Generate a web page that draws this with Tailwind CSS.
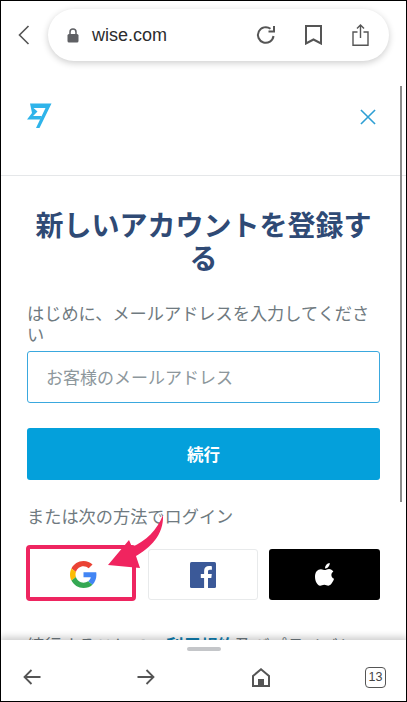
<!DOCTYPE html>
<html lang="ja"><head><meta charset="utf-8"><script src="https://cdn.jsdelivr.net/npm/@tailwindcss/browser@4"></script></head>
<body class="m-0 bg-white">
<div class="relative w-[407px] h-[702px] overflow-hidden bg-white font-['Noto_Sans_CJK_JP','Noto_Sans',sans-serif]">
  <!-- browser top bar -->
  <div class="h-[70px] flex items-start pl-[18px] pt-[9px]">
    <svg class="w-[12px] h-[20px] mt-[16px] mr-[18px]" viewBox="0 0 12 20" fill="none" stroke="#555" stroke-width="1.6"><path d="M10.5 1 1.500 10l9 9"/></svg>
    <div class="w-[341px] h-[52px] rounded-full bg-white shadow-[0_2px_7px_rgba(0,0,0,0.2)] flex items-center pl-[19px] pr-[20px]">
      <svg class="w-[12px] h-[15px] mr-[13px]" viewBox="0 0 12 15"><path d="M3 6V4a3 3 0 0 1 6 0v2" fill="none" stroke="#5f6064" stroke-width="1.500"/><rect x="0.500" y="6" width="11" height="8.500" rx="1.500" fill="#5f6064"/></svg>
      <span class="font-['Liberation_Sans'] text-[18px] text-[#2c2c2e] flex-1">wise.com</span>
      <svg class="w-[20px] h-[20px] mr-[29px]" viewBox="0 0 20 20" fill="none" stroke="#555" stroke-width="2"><path d="M17.500 11a7.800 7.800 0 1 1-3-7.200"/><path d="M18 1v5.500h-5.500" stroke-width="2"/></svg>
      <svg class="w-[17px] h-[20px] mr-[30px]" viewBox="0 0 17 20" fill="none" stroke="#555" stroke-width="2"><path d="M1 1h15v17.500l-7.500-4-7.500 4z"/></svg>
      <svg class="w-[17px] h-[22px]" viewBox="0 0 17 22" fill="none" stroke="#555" stroke-width="1.400"><path d="M5.500 8H1v13.300h15V8h-4.500M8.500 14V1M5 4.500 8.500 1 12 4.500"/></svg>
    </div>
  </div>
  <!-- page -->
  <div class="h-[106px] border-b border-[#e5e7e9] flex items-start justify-between pl-[27px] pr-[31px]">
    <svg class="w-[25px] h-[25px] mt-[33px]" viewBox="27 103.500 25 25" fill="#2fb4ea"><path d="M30 104H51.500L39.500 128.500H36L45.500 108.500H33.500L37.500 112 33 116.500H41.500L40 120H27L32 113.500z"/></svg>
    <svg class="w-[16px] h-[16px] mt-[39px]" viewBox="0 0 17 17" fill="none" stroke="#2e9fd4" stroke-width="1.700"><path d="m1 1 15 15M16 1 1 16"/></svg>
  </div>
  <div class="px-[27px]">
    <h1 class="mt-[32px] text-center text-[28px] leading-[33px] font-bold text-[#2f4a75]">新しいアカウントを登録する</h1>
    <p class="mt-[28px] text-[17.200px] leading-[21px] text-[#6f7a80]">はじめに、メールアドレスを入力してください</p>
    <div class="mt-[7px] h-[52px] rounded-[3px] border border-[#3aa8de] flex items-center pl-[18px] text-[17px] text-[#8d979c]">お客様のメールアドレス</div>
    <div class="mt-[25px] h-[52px] rounded-[3px] bg-[#04a0db] flex items-center justify-center text-[16.500px] font-bold text-white">続行</div>
    <p class="mt-[23px] text-[17.200px] leading-[26px] text-[#6f7a80]">または次の方法でログイン</p>
    <div class="mt-[20px] flex gap-[11px]">
      <div class="w-[110px] h-[51px] rounded-[3px] flex items-center justify-center">
        <svg class="w-[27px] h-[27px] ml-[2px]" viewBox="0 0 48 48"><path fill="#EA4335" d="M24 9.500c3.540 0 6.710 1.220 9.210 3.600l6.850-6.850C35.900 2.380 30.470 0 24 0 14.620 0 6.510 5.380 2.560 13.220l7.980 6.190C12.430 13.720 17.740 9.500 24 9.500z"/><path fill="#4285F4" d="M46.980 24.550c0-1.570-.15-3.090-.38-4.550H24v9.020h12.940c-.58 2.960-2.260 5.480-4.780 7.180l7.730 6c4.510-4.180 7.090-10.360 7.090-17.650z"/><path fill="#FBBC05" d="M10.530 28.590c-.48-1.450-.76-2.990-.76-4.590s.27-3.140.76-4.590l-7.980-6.190C.92 16.460 0 20.120 0 24c0 3.880.92 7.540 2.560 10.780l7.970-6.190z"/><path fill="#34A853" d="M24 48c6.480 0 11.930-2.130 15.890-5.810l-7.730-6c-2.150 1.450-4.920 2.300-8.160 2.300-6.260 0-11.570-4.220-13.470-9.910l-7.980 6.190C6.510 42.620 14.620 48 24 48z"/></svg>
      </div>
      <div class="w-[110px] h-[51px] rounded-[3px] border border-[#e8eaeb] flex items-center justify-center">
        <svg class="w-[26px] h-[26px]" viewBox="0 0 26 26"><rect width="26" height="26" rx="1.500" fill="#3b5998"/><path fill="#fff" d="M18 26V16h3.300l.5-3.900H18V9.700c0-1.100.3-1.900 1.900-1.900h2V4.300c-.4 0-1.600-.2-2.900-.2-2.900 0-4.900 1.800-4.900 5v3H10.800V16h3.300v10z"/></svg>
      </div>
      <div class="w-[111px] h-[51px] rounded-[3px] bg-black flex items-center justify-center">
        <svg class="w-[20px] h-[24px]" viewBox="-0.500 0 19 23" fill="#fff"><path d="M13.500 0c.2 1.400-.4 2.700-1.200 3.700-.8 1-2 1.700-3.200 1.600-.2-1.300.4-2.700 1.200-3.600C11.100.8 12.400.1 13.500 0zM17 8.200c-1.100.7-1.900 1.900-1.900 3.300 0 1.700 1 3.100 2.600 3.700-.4 1.300-1 2.500-1.800 3.600-1 1.500-2.100 3-3.700 3-1.600 0-2.100-.9-3.900-.9-1.900 0-2.400.9-3.900.9-1.500.1-2.700-1.600-3.700-3.100C-.9 15.600-1.200 10.500 1 8c1-1.300 2.600-2.100 4.100-2.100 1.600 0 2.600.9 3.900.9 1.200 0 2-1 3.900-1 1.600 0 3.100.8 4.100 2.400z"/></svg>
      </div>
    </div>
    <p class="mt-[32px] text-[17.200px] leading-[26px] whitespace-nowrap text-[#6f7a80]">続行することで、<span class="ml-[3px] font-bold text-[#0f7fb2]">利用規約</span>及びプライバシー</p>
  </div>
  <!-- scrollbar -->
  <div class="absolute right-[5px] top-[86px] w-[2px] h-[416px] bg-[#8a8a8a]"></div>
  <!-- annotation -->
  <div class="absolute left-[26px] top-[545px] w-[110px] h-[56px] rounded-[4px] border-[4px] border-[#ee2560]"></div>
  <svg class="absolute left-[100px] top-[510px] w-[70px] h-[62px]" viewBox="100 510 70 62" fill="#f0245f"><path d="M163 515C164 535 150 548 136 556L140 568 108 565 129 540 132 547C146 541 157 530 163 515z"/></svg>
  <!-- bottom bar -->
  <div class="absolute left-0 right-0 top-[640px] h-[62px] bg-white shadow-[0_-3px_7px_rgba(0,0,0,0.2)]">
    <div class="mx-auto mt-[7px] w-[34px] h-[4px] rounded-full bg-[#c4c6c9]"></div>
    <div class="relative mt-[14px] h-[24px] flex items-center pl-[23px]">
      <svg class="w-[18px] h-[16px]" viewBox="0 0 18 16" fill="none" stroke="#555" stroke-width="1.800"><path d="M17.500 8H1.500M8.500 1l-7 7 7 7"/></svg>
      <svg class="w-[18px] h-[16px] ml-[96px]" viewBox="0 0 18 16" fill="none" stroke="#555" stroke-width="1.800"><path d="M.5 8h16M9.500 1l7 7-7 7"/></svg>
      <svg class="w-[18px] h-[19px] ml-[97px]" viewBox="0 0 18 19" fill="none" stroke="#555" stroke-width="2"><path d="M1 8 9 1.300 17 8v10H1z"/><path d="M6 18v-7h6v7z" fill="#555" stroke="none"/></svg>
      <div class="ml-[95px] w-[21px] h-[21px] rounded-[4px] border-[1.500px] border-[#555] flex items-center justify-center text-[12.500px] font-['Liberation_Sans'] text-[#444]">13</div>
    </div>
  </div>
  <!-- frame -->
  <div class="absolute inset-0 border border-black pointer-events-none"></div>
</div>
</body></html>
